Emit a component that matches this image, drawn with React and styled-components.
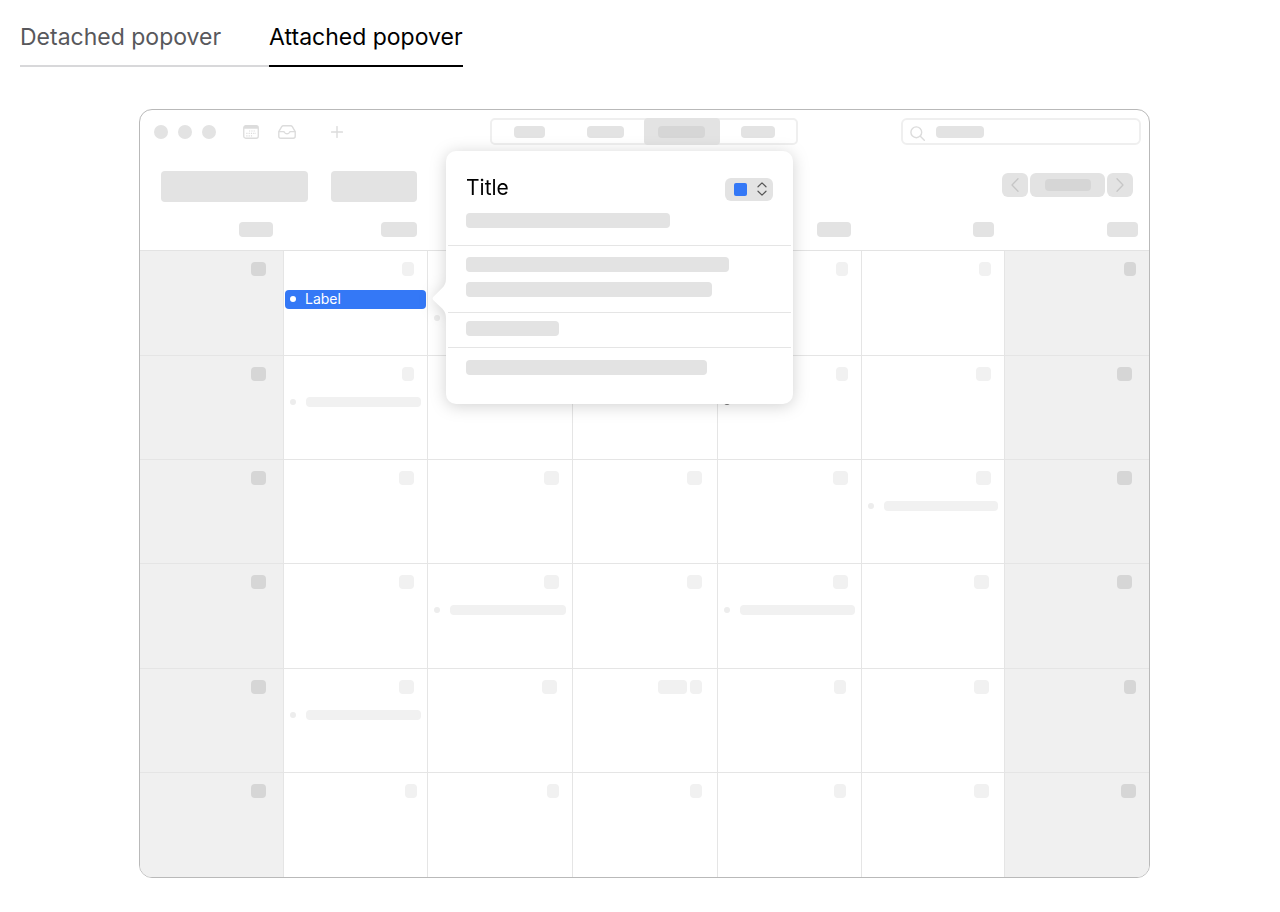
import React from 'react';
import styled, { createGlobalStyle } from 'styled-components';

const GlobalStyle = createGlobalStyle`
    * {
        box-sizing: border-box;
    }

    body {
        margin: 0;
        background: white;
        font-family: Inter, 'Liberation Sans', sans-serif;
    }

    button {
        font-family: inherit;
        border: none;
        margin: 0;
        padding: 0;
        background: none;
        cursor: pointer;
    }
`;

const Page = styled.main`
    padding: 16px 11px 34px 20px;
`;

const Tabs = styled.div`
    display: flex;
    margin-bottom: 42px;
`;

const Tab = styled.button`
    height: 51px;
    padding: 0 ${({ $active }) => ($active ? 0 : 48)}px 8px 0;
    border-bottom: 2px solid ${({ $active }) => ($active ? '#000' : '#d8d8da')};
    color: ${({ $active }) => ($active ? '#000' : '#58585c')};
    font-size: 23px;
    line-height: 28px;
    text-align: left;
    white-space: nowrap;
`;

const Window = styled.section`
    width: 100%;
    max-width: 1011px;
    margin: 0 auto;
    border: 1px solid #b9b9b9;
    border-radius: 13px;
    overflow: hidden;
`;

const Bar = styled.span`
    display: block;
    flex: none;
    width: ${({ $w }) => $w}px;
    height: ${({ $h }) => $h || 15}px;
    border-radius: 4px;
    background: ${({ $tone }) => $tone || '#e3e3e3'};
`;

const Toolbar = styled.div`
    display: grid;
    grid-template-columns: 1fr auto 1fr;
    align-items: center;
    padding: 8px 8px 0 6px;

    svg {
        flex: none;
        fill: none;
        stroke: #dcdcdc;
    }
`;

const ToolbarLeft = styled.div`
    display: flex;
    align-items: center;
    padding-left: 8px;
`;

const Lights = styled.div`
    display: flex;
    gap: 10px;
    margin-right: 27px;

    span {
        width: 14px;
        height: 14px;
        border-radius: 50%;
        background: #e3e3e3;
    }
`;

const IconButton = styled.button`
    display: flex;
    margin-right: ${({ $gap }) => $gap || 0}px;
`;

const Segments = styled.div`
    display: flex;
    height: 27px;
    border: 2px solid #efefef;
    border-radius: 5px;
`;

const Segment = styled.button`
    display: flex;
    justify-content: center;
    align-items: center;
    width: 76px;
    margin: -2px 0;
    border-radius: 4px;
    background: ${({ $active }) => ($active ? '#e3e3e3' : 'none')};
`;

const Search = styled.label`
    display: flex;
    align-items: center;
    justify-self: end;
    width: 240px;
    height: 27px;
    padding: 0 7px;
    border: 2px solid #efefef;
    border-radius: 6px;

    svg {
        margin: 4px 11px 0 0;
    }

    input {
        flex: 1;
        min-width: 0;
        border: none;
        outline: none;
        background: none;
    }
`;

const Heading = styled.div`
    display: flex;
    gap: 23px;
    margin-top: 26px;
    padding: 0 16px 0 21px;
`;

const Pager = styled.div`
    display: flex;
    gap: 2px;
    margin: 2px 0 0 auto;
`;

const PagerButton = styled.button`
    display: flex;
    justify-content: center;
    align-items: center;
    width: ${({ $w }) => $w}px;
    height: 24px;
    border-radius: 6px;
    background: #e3e3e3;

    svg {
        fill: none;
        stroke: #c6c6c6;
    }
`;

const columns = '144fr 144fr 145fr 145fr 144fr 143fr 144fr';

const Weekdays = styled.div`
    display: grid;
    grid-template-columns: ${columns};
    justify-items: end;
    padding: 20px 0 13px;
    border-bottom: 1px solid #e3e3e3;

    span {
        margin-right: 11px;
    }
`;

const Month = styled.div`
    display: grid;
    grid-template-columns: ${columns};
    grid-template-rows: 105px 104px 104px 105px 104px 104px;
`;

const Day = styled.div`
    min-width: 0;
    padding-top: 11px;
    background: ${({ $weekend }) => ($weekend ? '#f0f0f0' : 'white')};
    border-right: 1px solid #e5e5e5;
    border-bottom: 1px solid #e5e5e5;

    &:nth-child(7n) {
        border-right: none;
    }

    &:nth-child(n + 36) {
        border-bottom: none;
    }
`;

const DayNumber = styled.div`
    display: flex;
    justify-content: flex-end;
    gap: 3px;
    padding-right: ${({ $inset }) => $inset - 1}px;
`;

const Event = styled.div`
    display: flex;
    align-items: center;
    gap: 10px;
    height: 10px;
    margin-top: ${({ $second }) => ($second ? 37 : 16)}px;
    padding: 0 6px;
`;

const Dot = styled.span`
    flex: none;
    width: 6px;
    height: 6px;
    border-radius: 50%;
    background: ${({ $color }) => $color || '#ededed'};
`;

const EventBar = styled.span`
    flex: 1;
    height: 10px;
    border-radius: 4px;
    background: #f1f1f1;
`;

const Anchor = styled.div`
    position: relative;
    z-index: 1;
    margin: 14px 1px 0;
`;

const SelectedEvent = styled.button`
    display: flex;
    align-items: center;
    gap: 9px;
    width: 100%;
    height: 19px;
    padding: 0 5px 2px;
    border-radius: 4px;
    background: #3478f6;
    color: white;
    font-size: 14px;
    line-height: 17px;
`;

const PopoverBox = styled.div`
    position: absolute;
    top: -139px;
    left: calc(100% + 20px);
    width: 347px;
    border-radius: 10px;
    background: white;
    filter: drop-shadow(0 2px 8px rgba(0, 0, 0, 0.18));
`;

const Arrow = styled.svg`
    position: absolute;
    top: 128px;
    left: -14px;
    fill: white;
`;

const PopoverSection = styled.div`
    display: flex;
    flex-direction: column;
    gap: 10px;
    margin: 0 2px;
    padding: ${({ $top }) => $top}px 18px ${({ $bottom }) => $bottom}px;

    & + & {
        border-top: 1px solid #e5e5e5;
    }
`;

const TitleRow = styled.div`
    display: flex;
    justify-content: space-between;
    align-items: center;
    height: 22px;
    margin-bottom: 3px;

    h2 {
        margin: 0 0 2px;
        font-size: 21px;
        font-weight: 400;
        line-height: 24px;
        color: black;
    }
`;

const ColorPicker = styled.label`
    position: relative;
    display: flex;
    align-items: center;
    justify-content: space-between;
    width: 48px;
    height: 23px;
    padding: 0 6px 0 9px;
    border-radius: 6px;
    background: #e3e3e3;

    svg {
        fill: none;
        stroke: #555;
    }

    select {
        position: absolute;
        inset: 0;
        width: 100%;
        opacity: 0;
    }
`;

const Swatch = styled.span`
    width: 13px;
    height: 13px;
    border-radius: 2px;
    background: #3478f6;
`;

const CalendarIcon = () => (
    <svg width="16" height="14" viewBox="0 0 16 14">
        <rect x="0.75" y="0.75" width="14.5" height="12.5" rx="2" strokeWidth="1.3" />
        <path d="M1 2.4h14" strokeWidth="2.8" />
        <path d="M6 6h7M3.3 8.4h9.7M3.3 10.8h7" strokeWidth="1.2" strokeDasharray="1.2 1.1" />
    </svg>
);

const TrayIcon = () => (
    <svg width="18" height="14" viewBox="0 0 18 14" strokeWidth="1.4" strokeLinejoin="round">
        <path d="M0.8 6.6 3.700 1.700Q4.300 0.800 5.400 0.800h7.200q1.100 0 1.700 0.900l2.900 4.900v4.600q0 2-2 2H2.8q-2 0-2-2z" />
        <path d="M0.8 6.6h4.600q0.900 0 1.200 0.900a2.600 2.100 0 0 0 4.800 0q0.300-0.900 1.200-0.900h4.600" />
    </svg>
);

const PlusIcon = () => (
    <svg width="12" height="12" viewBox="0 0 12 12" strokeWidth="1.4" strokeLinecap="round">
        <path d="M6 0.6v10.8M0.6 6h10.8" />
    </svg>
);

const SearchIcon = () => (
    <svg width="15" height="15" viewBox="0 0 15 15" strokeWidth="1.4" strokeLinecap="round">
        <circle cx="6.3" cy="6.3" r="5.4" />
        <path d="m10.3 10.3 4 4" />
    </svg>
);

const Chevron = ({ d }) => (
    <svg width="8" height="14" viewBox="0 0 8 14" strokeWidth="1.3" strokeLinecap="round" strokeLinejoin="round">
        <path d={d} />
    </svg>
);

// [marker widths, right inset, event]
const weeks = [
    [[[15], 18], [[12], 14, 'selected'], [[15], 14, 'second'], [[12], 16], [[12], 14], [[12], 14], [[12], 14]],
    [[[15], 18], [[12], 14, 'plain'], [[15], 14], [[12], 16], [[12], 14, 'dark'], [[15], 14], [[15], 18]],
    [[[15], 18], [[15], 14], [[15], 14], [[15], 16], [[15], 14], [[15], 14, 'plain'], [[15], 18]],
    [[[15], 18], [[15], 14], [[15], 14, 'plain'], [[15], 16], [[15], 14, 'plain'], [[15], 16], [[15], 18]],
    [[[15], 18], [[15], 14, 'plain'], [[15], 16], [[29, 12], 16], [[12], 16], [[15], 16], [[12], 14]],
    [[[15], 18], [[12], 11], [[12], 14], [[12], 16], [[12], 16], [[15], 16], [[15], 14]],
];

const weekdayWidths = [34, 36, 36, 36, 34, 21, 31];

const Popover = () => (
    <PopoverBox role="dialog" aria-label="Title">
        <Arrow width="15" height="40" viewBox="0 0 15 40">
            <path d="M15 0H14C14 4 12.600 6.600 10.200 9L1.200 17.900Q0 19.500 1.200 21.100L10.200 29.500C12.600 32 14 34.500 14 39H15z" />
        </Arrow>
        <PopoverSection $top={27} $bottom={17}>
            <TitleRow>
                <h2>Title</h2>
                <ColorPicker>
                    <Swatch />
                    <svg width="10" height="14" viewBox="0 0 10 14" strokeWidth="1.2" strokeLinecap="round" strokeLinejoin="round">
                        <path d="M1 4.8 5 0.9l4 3.900M1 9.200l4 3.900 4-3.900" />
                    </svg>
                    <select aria-label="Calendar color">
                        <option aria-label="Blue" />
                    </select>
                </ColorPicker>
            </TitleRow>
            <Bar $w={204} />
        </PopoverSection>
        <PopoverSection $top={11} $bottom={15}>
            <Bar $w={263} />
            <Bar $w={246} />
        </PopoverSection>
        <PopoverSection $top={8} $bottom={11}>
            <Bar $w={93} />
        </PopoverSection>
        <PopoverSection $top={12} $bottom={29}>
            <Bar $w={241} />
        </PopoverSection>
    </PopoverBox>
);

const DayEvent = ({ type }) => {
    if (type === 'selected') {
        return (
            <Anchor>
                <SelectedEvent type="button">
                    <Dot $color="white" />
                    Label
                </SelectedEvent>
                <Popover />
            </Anchor>
        );
    }
    return (
        <Event $second={type === 'second'}>
            <Dot $color={type === 'dark' ? '#777' : undefined} />
            {type === 'plain' && <EventBar />}
        </Event>
    );
};

const App = () => {
    return (
        <Page>
            <GlobalStyle />
            <Tabs role="tablist">
                <Tab type="button" role="tab" aria-selected="false">Detached popover</Tab>
                <Tab type="button" role="tab" aria-selected="true" $active>Attached popover</Tab>
            </Tabs>
            <Window>
                <Toolbar>
                    <ToolbarLeft>
                        <Lights>
                            <span />
                            <span />
                            <span />
                        </Lights>
                        <IconButton type="button" aria-label="Calendars" $gap={19}><CalendarIcon /></IconButton>
                        <IconButton type="button" aria-label="Inbox" $gap={35}><TrayIcon /></IconButton>
                        <IconButton type="button" aria-label="Add"><PlusIcon /></IconButton>
                    </ToolbarLeft>
                    <Segments>
                        <Segment type="button" aria-label="Day"><Bar $w={31} $h={12} /></Segment>
                        <Segment type="button" aria-label="Week"><Bar $w={37} $h={12} /></Segment>
                        <Segment type="button" aria-label="Month" $active><Bar $w={47} $h={12} $tone="#d6d6d6" /></Segment>
                        <Segment type="button" aria-label="Year"><Bar $w={34} $h={12} /></Segment>
                    </Segments>
                    <Search>
                        <SearchIcon />
                        <Bar $w={48} $h={12} />
                        <input type="text" aria-label="Search" />
                    </Search>
                </Toolbar>
                <Heading>
                    <Bar $w={147} $h={31} />
                    <Bar $w={86} $h={31} />
                    <Pager>
                        <PagerButton type="button" aria-label="Previous" $w={26}><Chevron d="M7 0.8 1 7l6 6.2" /></PagerButton>
                        <PagerButton type="button" aria-label="Today" $w={75}><Bar $w={46} $h={12} $tone="#d6d6d6" /></PagerButton>
                        <PagerButton type="button" aria-label="Next" $w={26}><Chevron d="M1 0.8 7 7l-6 6.2" /></PagerButton>
                    </Pager>
                </Heading>
                <Weekdays>
                    {weekdayWidths.map((w, i) => <Bar key={i} $w={w} />)}
                </Weekdays>
                <Month>
                    {weeks.map((week, row) => week.map(([markers, inset, event], col) => {
                        const weekend = col === 0 || col === 6;
                        return (
                            <Day key={`${row}-${col}`} $weekend={weekend}>
                                <DayNumber $inset={inset}>
                                    {markers.map((w) => (
                                        <Bar key={w} $w={w} $h={14} $tone={weekend ? '#d6d6d6' : '#f1f1f1'} />
                                    ))}
                                </DayNumber>
                                {event && <DayEvent type={event} />}
                            </Day>
                        );
                    }))}
                </Month>
            </Window>
        </Page>
    );
};

export default App;
